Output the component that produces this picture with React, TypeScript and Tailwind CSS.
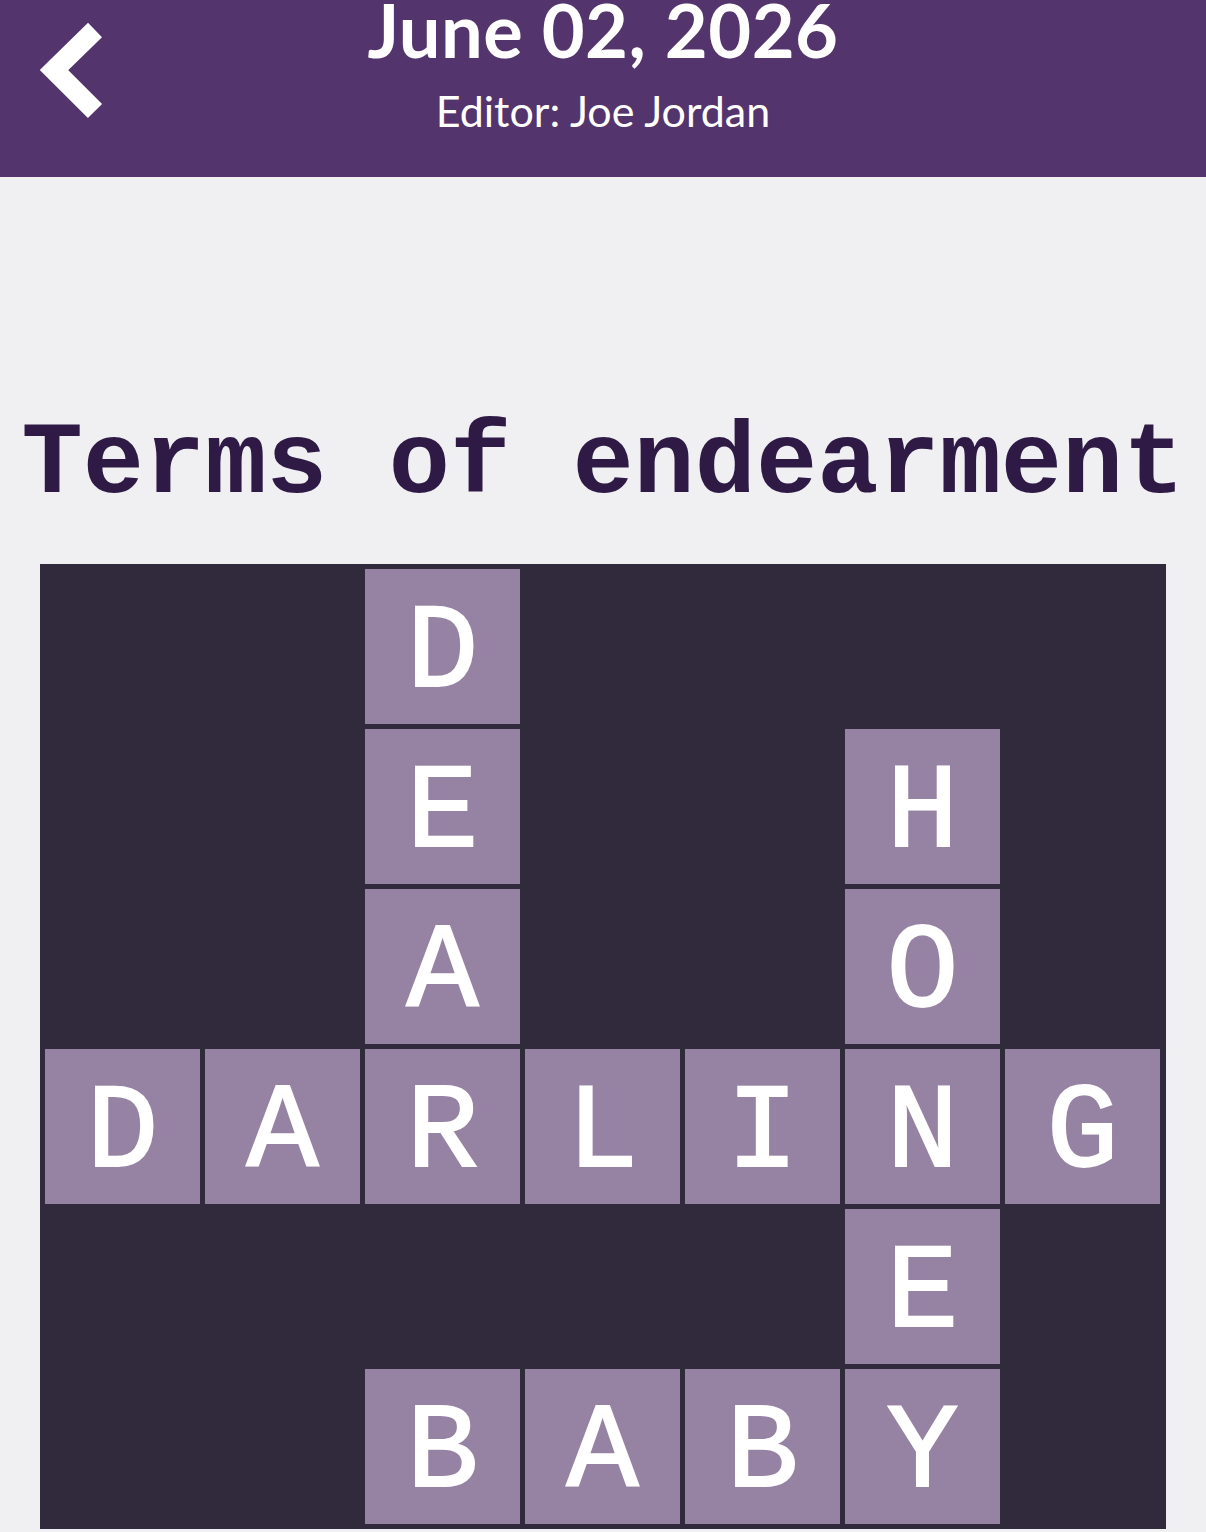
import React from 'react';

const rows: string[] = [
  '  D    ',
  '  E  H ',
  '  A  O ',
  'DARLING',
  '     E ',
  '  BABY ',
];

const Cell: React.FC<{ letter: string }> = ({ letter }) => {
  if (letter === ' ') return <div className="h-[155px] w-[155px]" />;
  return (
    <div className="flex h-[155px] w-[155px] items-center justify-center bg-[#9682a3] pt-[14px] font-['Liberation_Mono',monospace] text-[120px] leading-none text-white [-webkit-text-stroke:2px_white]">
      {letter}
    </div>
  );
};

export default function App() {
  return (
    <div className="min-h-[1532px] w-full bg-[#f0f0f2]">
      <header className="relative flex h-[177px] flex-col items-center bg-[#54346c] text-white font-['Lato',sans-serif]">
        <button className="absolute left-[36px] top-[18px]">
          <svg width="76" height="108" viewBox="0 0 76 108">
            <polyline points="59,12 18,52 59,93" fill="none" stroke="white" strokeWidth="20" strokeLinejoin="miter" />
          </svg>
        </button>
        <h1 className="text-[74px] font-bold leading-[60px] tracking-[0.5px]">June 02, 2026</h1>
        <p className="mt-[29px] text-[43px] leading-none">Editor: Joe Jordan</p>
      </header>

      <h2 className="mt-[237px] text-center font-['Liberation_Mono',monospace] text-[102px] font-bold leading-none text-[#2e1a45]">
        Terms of endearment
      </h2>

      <div className="mx-auto mt-[48px] grid w-[1126px] grid-cols-7 gap-[5px] bg-[#312a3c] p-[5px] pr-[6px]">
        {rows.map((row, r) =>
          row.split('').map((ch, c) => <Cell key={`${r}-${c}`} letter={ch} />)
        )}
      </div>
    </div>
  );
}
